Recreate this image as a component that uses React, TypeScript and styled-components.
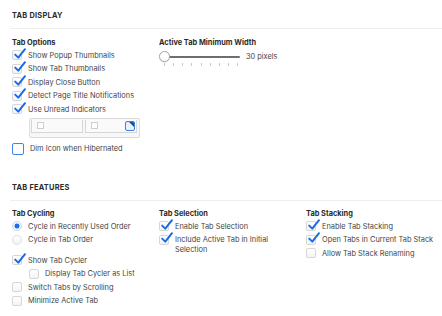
import React from "react";
import styled, { createGlobalStyle } from "styled-components";

const Global = createGlobalStyle`
  html, body { margin: 0; padding: 0; background: #fff; }
  body { font-family: Inter, "Noto Sans", sans-serif; -webkit-font-smoothing: antialiased; }
  * { box-sizing: border-box; }
`;

const Page = styled.div`
  width: 442px;
  height: 316px;
  overflow: hidden;
  background: #fff;
`;

const Section = styled.section<{ $top: number }>`
  padding-top: ${(p) => p.$top}px;
`;

const SectionTitle = styled.h2`
  margin: 0;
  padding: 0 12px 0 12px;
  height: 13px;
  line-height: 13px;
  font-size: 7.4px;
  font-weight: 700;
  letter-spacing: 0.25px;
  color: #2b2b2b;
  text-transform: uppercase;
`;

const Divider = styled.div`
  margin: 6px 0 6px 10px;
  height: 1px;
  background: #eeeeee;
`;

const Columns = styled.div<{ $pad?: number }>`
  display: grid;
  grid-template-columns: 147px 147px 148px;
  padding-left: 12px;
  padding-top: ${(p) => p.$pad ?? 0}px;
`;

const Column = styled.div`
  display: flex;
  flex-direction: column;
`;

const GroupTitle = styled.div`
  height: 13px;
  line-height: 13px;
  font-size: 7.4px;
  font-weight: 700;
  color: #2b2b2b;
`;

const Row = styled.label<{ $indent?: number; $gapTop?: number }>`
  display: flex;
  align-items: flex-start;
  gap: 6px;
  min-height: 13.5px;
  padding-left: ${(p) => p.$indent ?? 0}px;
  margin-top: ${(p) => p.$gapTop ?? 0}px;
  font-size: 7.4px;
  line-height: 10px;
  color: #454545;
  padding-top: 1.5px;
`;

const BoxWrap = styled.span`
  position: relative;
  flex: none;
  width: 10px;
  height: 10px;
  margin-top: -0.5px;
`;

const Box = styled.span`
  display: block;
  width: 10px;
  height: 10px;
  border-radius: 2px;
  border: 1px solid #d6d6d6;
  background: linear-gradient(#ffffff, #f4f4f4);
`;

const BigBox = styled.span`
  display: block;
  flex: none;
  width: 12px;
  height: 12px;
  margin-top: -1px;
  border-radius: 2px;
  border: 1.3px solid #3d86e6;
  background: #fff;
`;

const Tick = styled.svg`
  position: absolute;
  left: 1.5px;
  top: -2.5px;
  width: 12px;
  height: 11px;
  overflow: visible;
`;

const Radio = styled.span<{ $on?: boolean }>`
  flex: none;
  width: 10px;
  height: 10px;
  border-radius: 50%;
  margin-top: -0.5px;
  border: 1px solid ${(p) => (p.$on ? "#c9dcf6" : "#dedede")};
  background: ${(p) =>
    p.$on ? "radial-gradient(circle, #1f6fe6 0 2.3px, #eaf2fd 2.7px)" : "linear-gradient(#fff, #f3f3f3)"};
`;

const Text = styled.span``;

function Check({ label, checked, indent, gapTop }: { label: React.ReactNode; checked?: boolean; indent?: number; gapTop?: number }) {
  return (
    <Row $indent={indent} $gapTop={gapTop}>
      <BoxWrap>
        <Box />
        {checked && (
          <Tick viewBox="0 0 12 11">
            <path d="M1.2 6.6 L4.3 9.6 L11 1.2" fill="none" stroke="#1b6be3" strokeWidth="2" strokeLinecap="round" strokeLinejoin="round" />
          </Tick>
        )}
      </BoxWrap>
      <Text>{label}</Text>
    </Row>
  );
}

function RadioRow({ label, on }: { label: string; on?: boolean }) {
  return (
    <Row>
      <Radio $on={on} />
      <Text>{label}</Text>
    </Row>
  );
}

const Preview = styled.div`
  margin: 1px 0 0 17px;
  width: 111px;
  height: 20px;
  border: 1px solid #dcdcdc;
  border-radius: 2px;
  background: #f7f7f7;
  display: flex;
  gap: 2px;
  padding: 1px 2px 0 1px;
`;

const PreviewTab = styled.div<{ $w: number }>`
  width: ${(p) => p.$w}px;
  height: 13px;
  border: 1px solid #d6d6d6;
  border-top: none;
  background: #fafafa;
  display: flex;
  align-items: center;
  justify-content: space-between;
  padding: 0 1px 0 5px;
`;

const MiniBox = styled.span`
  width: 7px;
  height: 7px;
  border: 1px solid #cfcfcf;
  background: #fff;
`;

const BlueSquare = styled.span`
  position: relative;
  width: 10px;
  height: 10px;
  border: 1.2px solid #3b82e0;
  border-radius: 2px;
  background: #e9f1fc;
  overflow: hidden;
`;

const Corner = styled.span`
  position: absolute;
  right: 0.5px;
  top: 0.5px;
  width: 0;
  height: 0;
  border-top: 5px solid #1d4f9a;
  border-left: 5px solid transparent;
`;

const DimRow = styled(Row)`
  margin-top: 5px;
`;

const SliderRow = styled.div`
  display: flex;
  align-items: flex-start;
  gap: 6px;
  margin-top: 2px;
`;

const SliderTrackArea = styled.div`
  position: relative;
  width: 81px;
  height: 16px;
`;

const Track = styled.div`
  position: absolute;
  left: 5px;
  right: 0;
  top: 5px;
  height: 2px;
  background: #6e6e6e;
  border-radius: 1px;
`;

const Knob = styled.div`
  position: absolute;
  left: 0;
  top: 0;
  width: 11px;
  height: 11px;
  border-radius: 50%;
  background: #fff;
  border: 1px solid #a9a9a9;
  box-shadow: 0 0.5px 1px rgba(0, 0, 0, 0.15);
`;

const Ticks = styled.div`
  position: absolute;
  left: 5px;
  right: 2px;
  top: 12px;
  display: flex;
  justify-content: space-between;
`;

const TickMark = styled.span`
  width: 1px;
  height: 2.5px;
  background: #c9c9c9;
`;

const SliderValue = styled.span`
  font-size: 7.4px;
  line-height: 10px;
  color: #454545;
  margin-top: 1px;
`;

export default function App() {
  return (
    <Page>
      <Global />
      <Section $top={9}>
        <SectionTitle>Tab Display</SectionTitle>
        <Divider />
        <Columns $pad={1}>
          <Column>
            <GroupTitle>Tab Options</GroupTitle>
            <Check checked label="Show Popup Thumbnails" />
            <Check checked label="Show Tab Thumbnails" />
            <Check checked label="Display Close Button" />
            <Check checked label="Detect Page Title Notifications" />
            <Check checked label="Use Unread Indicators" />
            <Preview>
              <PreviewTab $w={53}>
                <MiniBox />
              </PreviewTab>
              <PreviewTab $w={53}>
                <MiniBox />
                <BlueSquare>
                  <Corner />
                </BlueSquare>
              </PreviewTab>
            </Preview>
            <DimRow>
              <BigBox />
              <Text>Dim Icon when Hibernated</Text>
            </DimRow>
          </Column>
          <Column>
            <GroupTitle>Active Tab Minimum Width</GroupTitle>
            <SliderRow>
              <SliderTrackArea>
                <Track />
                <Ticks>
                  {Array.from({ length: 9 }).map((_, i) => (
                    <TickMark key={i} />
                  ))}
                </Ticks>
                <Knob />
              </SliderTrackArea>
              <SliderValue>30 pixels</SliderValue>
            </SliderRow>
          </Column>
          <Column />
        </Columns>
      </Section>
      <Section $top={25}>
        <SectionTitle>Tab Features</SectionTitle>
        <Divider />
        <Columns>
          <Column>
            <GroupTitle>Tab Cycling</GroupTitle>
            <RadioRow on label="Cycle in Recently Used Order" />
            <RadioRow label="Cycle in Tab Order" />
            <Check checked gapTop={7} label="Show Tab Cycler" />
            <Check indent={17} label="Display Tab Cycler as List" />
            <Check label="Switch Tabs by Scrolling" />
            <Check label="Minimize Active Tab" />
          </Column>
          <Column>
            <GroupTitle>Tab Selection</GroupTitle>
            <Check checked label="Enable Tab Selection" />
            <Check checked label={<>Include Active Tab in Initial<br />Selection</>} />
          </Column>
          <Column>
            <GroupTitle>Tab Stacking</GroupTitle>
            <Check checked label="Enable Tab Stacking" />
            <Check checked label="Open Tabs in Current Tab Stack" />
            <Check label="Allow Tab Stack Renaming" />
          </Column>
        </Columns>
      </Section>
    </Page>
  );
}
